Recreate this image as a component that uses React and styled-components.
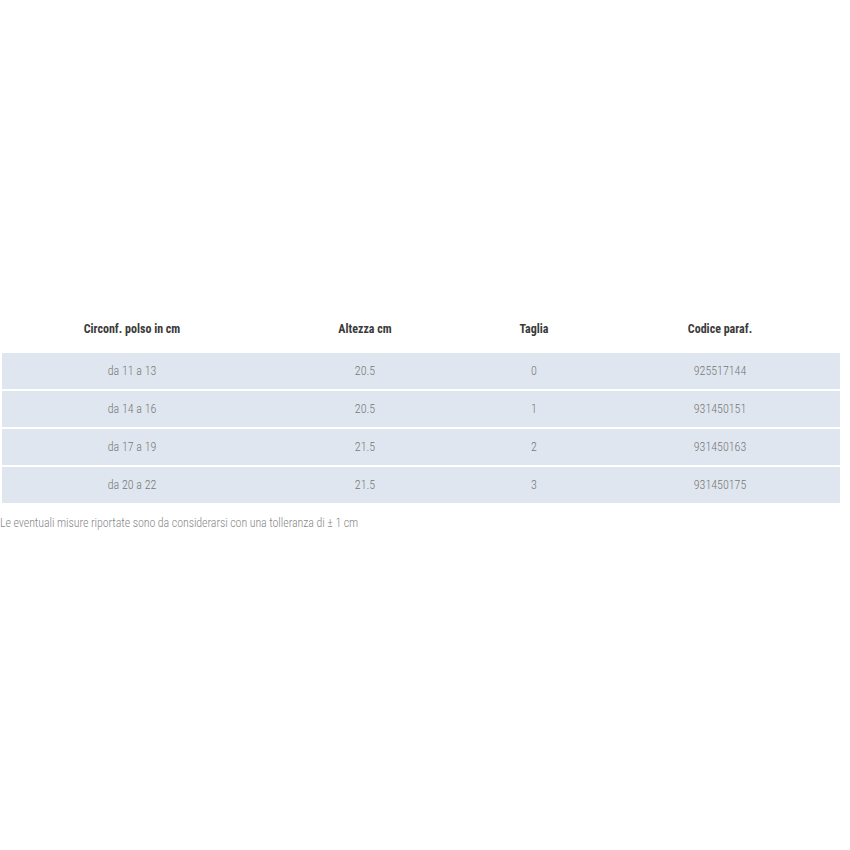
import React from 'react';
import styled, { createGlobalStyle } from 'styled-components';

const GlobalStyle = createGlobalStyle`
  html, body {
    margin: 0;
    padding: 0;
    background: #fff;
  }
  body {
    font-family: 'Roboto Condensed', 'Liberation Sans Narrow', 'DejaVu Sans Condensed', Roboto, sans-serif;
  }
`;

const rows = [
  ['da 11 a 13', '20.5', '0', '925517144'],
  ['da 14 a 16', '20.5', '1', '931450151'],
  ['da 17 a 19', '21.5', '2', '931450163'],
  ['da 20 a 22', '21.5', '3', '931450175'],
];

const Page = styled.div`
  padding-top: 309px;
`;

const Table = styled.table`
  margin-left: 2px;
  width: 838px;
  border-collapse: separate;
  border-spacing: 0 2.5px;
  table-layout: fixed;
`;

const Th = styled.th`
  height: 36px;
  padding: 0 0 4px;
  font-size: 12px;
  font-weight: 700;
  color: #3a3a3a;
  text-align: center;
`;

const Td = styled.td`
  height: 36px;
  padding: 0;
  background: #dfe6ef;
  font-size: 12px;
  font-weight: 300;
  color: #777;
  text-align: center;
`;

const Note = styled.p`
  margin: 11px 0 0;
  font-size: 12px;
  font-weight: 300;
  letter-spacing: -0.09px;
  color: #888;
`;

const widths = ['260px', '206px', '132px', '240px'];

export default function App() {
  return (
    <>
      <GlobalStyle />
      <Page>
        <Table>
          <colgroup>
            {widths.map((w, i) => (
              <col key={i} style={{ width: w }} />
            ))}
          </colgroup>
          <thead>
            <tr>
              <Th>Circonf. polso in cm</Th>
              <Th>Altezza cm</Th>
              <Th>Taglia</Th>
              <Th>Codice paraf.</Th>
            </tr>
          </thead>
          <tbody>
            {rows.map((r) => (
              <tr key={r[3]}>
                {r.map((c, i) => (
                  <Td key={i}>{c}</Td>
                ))}
              </tr>
            ))}
          </tbody>
        </Table>
        <Note>Le eventuali misure riportate sono da considerarsi con una tolleranza di ± 1 cm</Note>
      </Page>
    </>
  );
}
